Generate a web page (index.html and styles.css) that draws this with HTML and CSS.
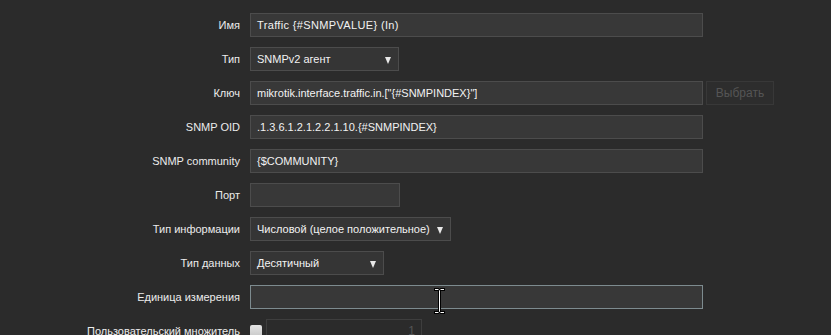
FILE: index.html
```html
<!DOCTYPE html>
<html lang="ru">
<head>
<meta charset="utf-8">
<link rel="stylesheet" href="styles.css">
</head>
<body>
<div class="form">
  <label class="lbl">Имя</label>
  <div class="fld"><div class="inp w-wide"><span class="loose">Traffic {#SNMPVALUE} (In)</span></div></div>

  <label class="lbl">Тип</label>
  <div class="fld"><div class="sel w-type">SNMPv2 агент<span class="arrow"></span></div></div>

  <label class="lbl">Ключ</label>
  <div class="fld"><div class="inp w-wide">mikrotik.interface.traffic.in.["{#SNMPINDEX}"]</div><div class="btn">Выбрать</div></div>

  <label class="lbl">SNMP OID</label>
  <div class="fld"><div class="inp w-wide">.1.3.6.1.2.1.2.2.1.10.{#SNMPINDEX}</div></div>

  <label class="lbl">SNMP community</label>
  <div class="fld"><div class="inp w-wide">{$COMMUNITY}</div></div>

  <label class="lbl">Порт</label>
  <div class="fld"><div class="inp w-port"></div></div>

  <label class="lbl">Тип информации</label>
  <div class="fld"><div class="sel w-info">Числовой (целое положительное)<span class="arrow"></span></div></div>

  <label class="lbl">Тип данных</label>
  <div class="fld"><div class="sel w-data">Десятичный<span class="arrow"></span></div></div>

  <label class="lbl">Единица измерения</label>
  <div class="fld"><div class="inp w-wide focus"></div></div>

  <label class="lbl">Пользовательский множитель</label>
  <div class="fld"><span class="chk"></span><div class="inp w-mult dis">1</div></div>
</div>
<svg class="cursor" width="11" height="26" viewBox="0 0 11 26">
  <path d="M0 0h4.5l1 1 1-1H11v3H7v20h4v3H6.5l-1-1-1 1H0v-3h4V3H0z" fill="#000"/>
  <path d="M1 1h3l1.5 1.5L7 1h3v1H6v22h4v1H7l-1.5-1.5L4 25H1v-1h4V2H1z" fill="#fff"/>
</svg>
</body>
</html>
```
FILE: styles.css
```css
html, body {
  margin: 0;
  padding: 0;
  background: #2b2b2b;
  font-family: Arial, "Liberation Sans", sans-serif;
  font-size: 11px;
  color: #f0f0f0;
  overflow: hidden;
}
.form {
  display: grid;
  grid-template-columns: 240px 1fr;
  column-gap: 10px;
  row-gap: 10px;
  padding-top: 13px;
}
.lbl {
  display: flex;
  align-items: center;
  justify-content: flex-end;
  height: 24px;
  color: #ececec;
  white-space: nowrap;
}
.fld {
  display: flex;
  align-items: center;
  height: 24px;
}
.inp, .sel {
  box-sizing: border-box;
  height: 24px;
  background: #383838;
  border: 1px solid #4c4c4c;
  padding: 0 6px;
  display: flex;
  align-items: center;
  white-space: nowrap;
  color: #f2f2f2;
}
.loose { letter-spacing: 0.35px; }
.sel {
  position: relative;
  padding-right: 20px;
  background: #353535;
}
.arrow {
  position: absolute;
  right: 7px;
  top: 9px;
  width: 0;
  height: 0;
  border-left: 3.5px solid transparent;
  border-right: 3.5px solid transparent;
  border-top: 7px solid #e8e8e8;
}
.w-wide { width: 453px; }
.w-type { width: 149px; }
.w-port { width: 150px; }
.w-info { width: 201px; }
.w-data { width: 134px; }
.w-mult { width: 156px; }
.focus { border-color: #7d8b8f; }
.btn {
  box-sizing: border-box;
  margin-left: 3px;
  width: 68px;
  height: 24px;
  border: 1px solid #383838;
  background: #2d2d2d;
  color: #555;
  font-size: 12px;
  display: flex;
  align-items: center;
  justify-content: center;
}
.chk {
  box-sizing: border-box;
  width: 12px;
  height: 12px;
  background: linear-gradient(#e4e4e4, #c8c8c8);
  border-radius: 2px;
  margin-right: 4px;
}
.dis {
  background: #2b2b2b;
  border-color: #3e3e3e;
  justify-content: flex-end;
  color: #555;
  font-size: 12px;
}
.cursor {
  position: absolute;
  left: 434px;
  top: 288px;
}
```
